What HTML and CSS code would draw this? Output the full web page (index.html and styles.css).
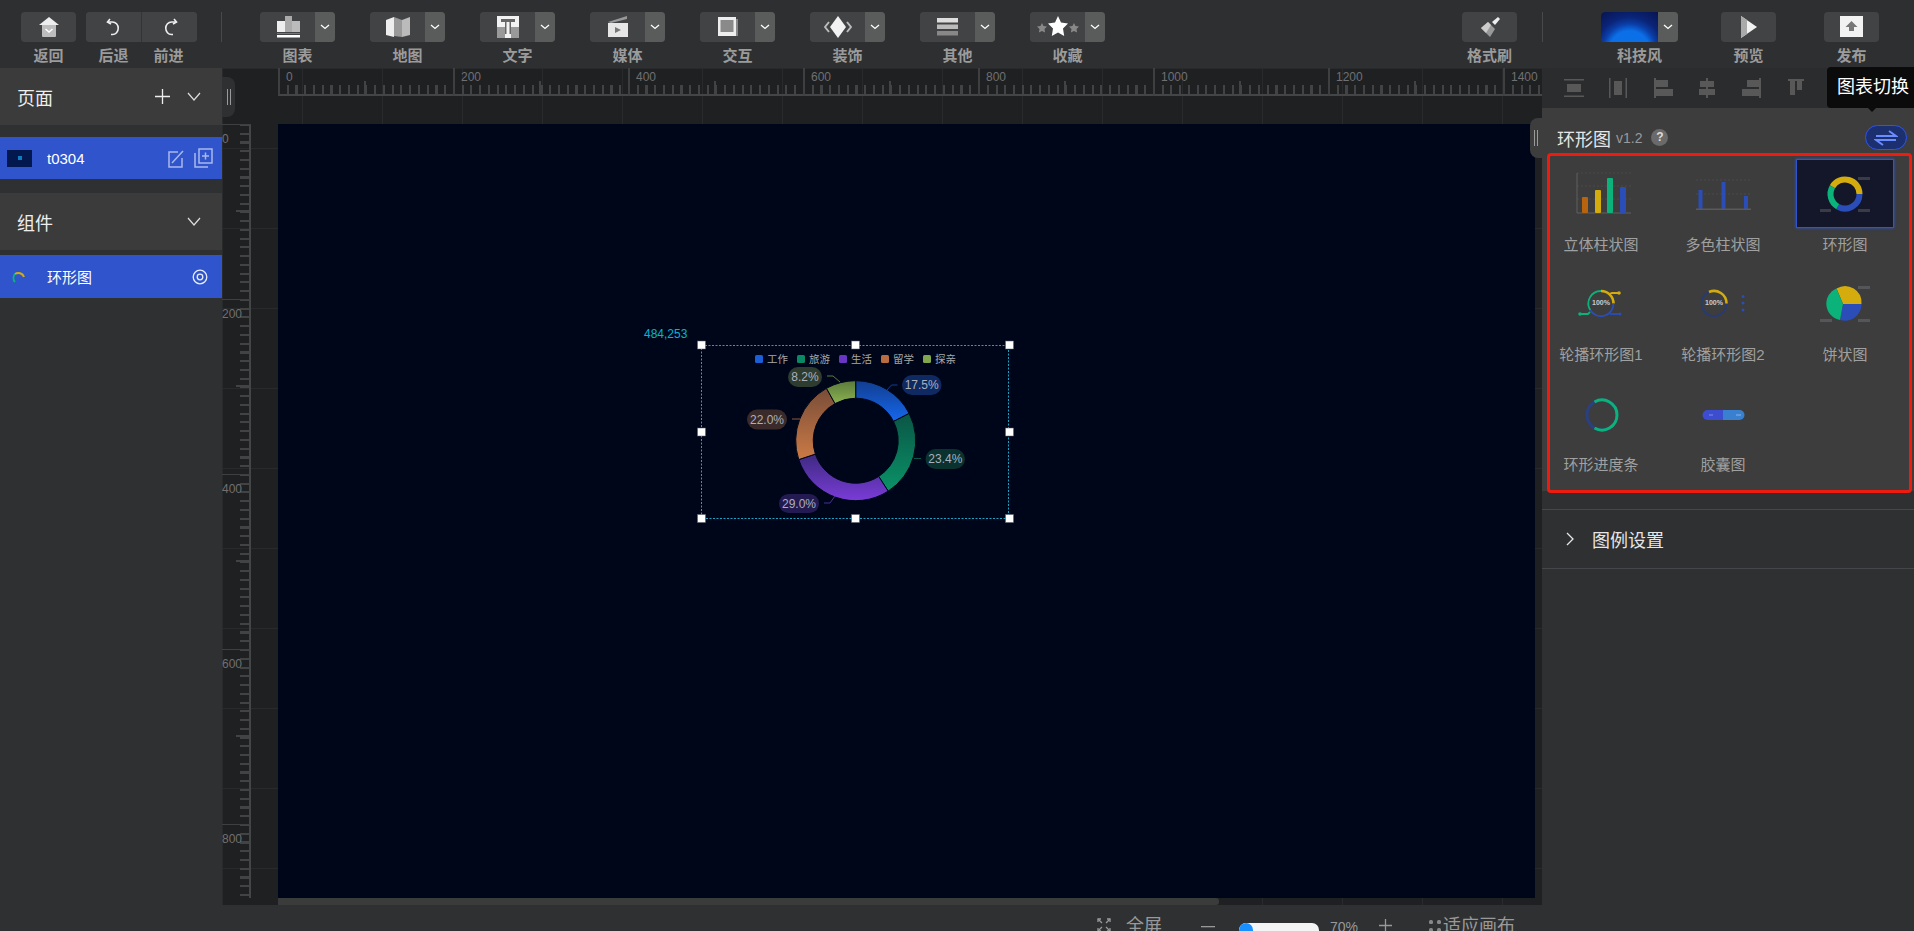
FILE: index.html
```html
<!DOCTYPE html>
<html lang="zh">
<head>
<meta charset="utf-8">
<title>环形图</title>
<link rel="stylesheet" href="styles.css">
</head>
<body>
<div class="app">
  <header class="toolbar">
    <div class="tool first">
      <div class="btn"><span class="btn-main"><svg width="20" height="20" viewBox="0 0 20 20"><path d="M10 0 20 8H0z" fill="#eee"/><path d="M3 8h14v11a1 1 0 0 1-1 1H4a1 1 0 0 1-1-1z" fill="#bdbdbd"/><path d="M6.500 12 10 15l3.500-3" fill="none" stroke="#fff" stroke-width="1.500"/></svg></span></div>
      <span class="tool-label">返回</span>
    </div>
    <div class="tool double">
      <div class="btn">
        <span class="btn-main sep"><svg width="18" height="18" viewBox="0 0 18 18" fill="none" stroke="#eee" stroke-width="1.600"><path d="M5 1 2.500 4 6 6"/><path d="M3 4h4.500a5.500 6 0 1 1 0 12.500H6"/></svg></span>
        <span class="btn-main"><svg width="18" height="18" viewBox="0 0 18 18" fill="none" stroke="#eee" stroke-width="1.600"><path d="M13 1l2.500 3L12 6"/><path d="M15 4h-4.500a5.500 6 0 1 0 0 12.500H12"/></svg></span>
      </div>
      <div class="double-labels"><span class="tool-label">后退</span><span class="tool-label">前进</span></div>
    </div>
    <div class="divider d1"></div>
    <div class="tool-group">
      <div class="tool">
        <div class="btn"><span class="btn-main"><svg width="24" height="24" viewBox="0 0 24 24"><rect x="1" y="6" width="8" height="11" fill="#eee"/><rect x="9" y="1" width="7" height="16" fill="#aaa"/><rect x="16" y="6" width="8" height="11" fill="#bbb"/><rect x="1" y="18" width="23" height="1" fill="#777"/><rect x="1" y="20" width="23" height="2.500" fill="#fff"/></svg></span><span class="btn-drop"><svg class="chev" width="10" height="6" viewBox="0 0 10 6"><path d="M1 1l4 3.500L9 1" fill="none" stroke="#fff" stroke-width="1.300"/></svg></span></div>
        <span class="tool-label">图表</span>
      </div>
      <div class="tool">
        <div class="btn"><span class="btn-main"><svg width="24" height="24" viewBox="0 0 24 24"><path d="M0 5l8-3v20l-8-2z" fill="#eee"/><path d="M8 2l8 3v17l-8-1z" fill="#999"/><path d="M16 5l8-3v18l-8 2z" fill="#bbb"/></svg></span><span class="btn-drop"><svg class="chev" width="10" height="6" viewBox="0 0 10 6"><path d="M1 1l4 3.500L9 1" fill="none" stroke="#fff" stroke-width="1.300"/></svg></span></div>
        <span class="tool-label">地图</span>
      </div>
      <div class="tool">
        <div class="btn"><span class="btn-main"><svg width="22" height="22" viewBox="0 0 22 22"><rect x="0" y="0" width="22" height="11" fill="#f2f2f2"/><rect x="0" y="11" width="22" height="11" fill="#999"/><rect x="8" y="4" width="6" height="18" fill="#f2f2f2"/><rect x="4" y="3" width="14" height="3" fill="#666"/><rect x="8" y="6" width="1.500" height="12" fill="#666"/><rect x="12.500" y="6" width="1.500" height="12" fill="#666"/></svg></span><span class="btn-drop"><svg class="chev" width="10" height="6" viewBox="0 0 10 6"><path d="M1 1l4 3.500L9 1" fill="none" stroke="#fff" stroke-width="1.300"/></svg></span></div>
        <span class="tool-label">文字</span>
      </div>
      <div class="tool">
        <div class="btn"><span class="btn-main"><svg width="22" height="22" viewBox="0 0 22 22"><path d="M1 6 20 0v3L4 7z" fill="#999"/><rect x="1" y="7" width="20" height="14" fill="#e6e6e6"/><path d="M8 11l6 3-6 3z" fill="#777"/></svg></span><span class="btn-drop"><svg class="chev" width="10" height="6" viewBox="0 0 10 6"><path d="M1 1l4 3.500L9 1" fill="none" stroke="#fff" stroke-width="1.300"/></svg></span></div>
        <span class="tool-label">媒体</span>
      </div>
      <div class="tool">
        <div class="btn"><span class="btn-main"><svg width="22" height="22" viewBox="0 0 22 22"><rect x="17" y="3" width="4" height="17" fill="#888"/><rect x="1" y="1" width="18" height="19" fill="#eee"/><rect x="3.500" y="4" width="13" height="12" fill="#8a8a8a"/></svg></span><span class="btn-drop"><svg class="chev" width="10" height="6" viewBox="0 0 10 6"><path d="M1 1l4 3.500L9 1" fill="none" stroke="#fff" stroke-width="1.300"/></svg></span></div>
        <span class="tool-label">交互</span>
      </div>
      <div class="tool">
        <div class="btn"><span class="btn-main"><svg width="28" height="22" viewBox="0 0 28 22"><path d="M14 0l8 11-8 11-8-11z" fill="#f2f2f2"/><path d="M5 6 1 11l4 5M23 6l4 5-4 5" fill="none" stroke="#bbb" stroke-width="2"/></svg></span><span class="btn-drop"><svg class="chev" width="10" height="6" viewBox="0 0 10 6"><path d="M1 1l4 3.500L9 1" fill="none" stroke="#fff" stroke-width="1.300"/></svg></span></div>
        <span class="tool-label">装饰</span>
      </div>
      <div class="tool">
        <div class="btn"><span class="btn-main"><svg width="22" height="18" viewBox="0 0 22 18"><rect width="21" height="4.500" fill="#ddd"/><rect y="6.500" width="21" height="4.500" fill="#bbb"/><rect y="13" width="21" height="4.500" fill="#888"/></svg></span><span class="btn-drop"><svg class="chev" width="10" height="6" viewBox="0 0 10 6"><path d="M1 1l4 3.500L9 1" fill="none" stroke="#fff" stroke-width="1.300"/></svg></span></div>
        <span class="tool-label">其他</span>
      </div>
      <div class="tool">
        <div class="btn"><span class="btn-main"><svg width="42" height="24" viewBox="0 0 42 24"><path id="" d="M5 8l1.500 3 3.500.5-2.500 2.500.6 3.500L5 16l-3.100 1.500.6-3.500L0 11.500l3.500-.5z" fill="#888"/><path d="M37 8l1.500 3 3.500.5-2.500 2.500.6 3.500L37 16l-3.100 1.500.6-3.500-2.500-2.500 3.500-.5z" fill="#888"/><path d="M21 1l3 6.500 7 1-5 5 1.200 7.500L21 17.500 14.800 21l1.200-7.500-5-5 7-1z" fill="#fff"/></svg></span><span class="btn-drop"><svg class="chev" width="10" height="6" viewBox="0 0 10 6"><path d="M1 1l4 3.500L9 1" fill="none" stroke="#fff" stroke-width="1.300"/></svg></span></div>
        <span class="tool-label">收藏</span>
      </div>
    </div>
    <div class="spacer"></div>
    <div class="tool">
      <div class="btn"><span class="btn-main"><svg width="22" height="22" viewBox="0 0 22 22"><path d="M13 6l6-5 2 2-5 6z" fill="#eee"/><path d="M9 6l7 7-5 8-9-9z" fill="#999"/><path d="M9 6l3 3-5 8-5-5z" fill="#ccc"/></svg></span></div>
      <span class="tool-label">格式刷</span>
    </div>
    <div class="divider d2"></div>
    <div class="tool theme">
      <div class="btn"><span class="theme-thumb"></span><span class="btn-drop"><svg class="chev" width="10" height="6" viewBox="0 0 10 6"><path d="M1 1l4 3.500L9 1" fill="none" stroke="#fff" stroke-width="1.300"/></svg></span></div>
      <span class="tool-label">科技风</span>
    </div>
    <div class="tool preview">
      <div class="btn"><span class="btn-main"><svg width="18" height="22" viewBox="0 0 18 22"><path d="M1 0l16 11L1 22z" fill="#f2f2f2"/><path d="M1 0l6 4v14l-6 4z" fill="#aaa"/></svg></span></div>
      <span class="tool-label">预览</span>
    </div>
    <div class="tool publish">
      <div class="btn"><span class="btn-main"><svg width="24" height="22" viewBox="0 0 24 22"><rect width="23" height="21" fill="#f2f2f2"/><path d="M11.500 5l6 6h-3.500v4h-5v-4H5.500z" fill="#777"/></svg></span></div>
      <span class="tool-label">发布</span>
    </div>
  </header>

  <div class="workspace">
    <aside class="left">
      <div class="section-head">
        <span class="section-title">页面</span>
        <svg class="plus" width="15" height="15" viewBox="0 0 15 15"><path d="M7.500 0v15M0 7.500h15" stroke="#eee" stroke-width="1.300"/></svg>
        <svg class="down" width="14" height="9" viewBox="0 0 14 9"><path d="M1 1l6 7 6-7" fill="none" stroke="#ddd" stroke-width="1.200"/></svg>
      </div>
      <div class="row page-row">
        <span class="page-thumb"><i></i></span>
        <span class="row-text">t0304</span>
        <svg class="edit" width="17" height="19" viewBox="0 0 17 19" fill="none" stroke="#a9b8ec" stroke-width="1.500"><path d="M14 9v9H1V3h9"/><path d="M4 14 15 2"/></svg>
        <svg class="copy" width="19" height="20" viewBox="0 0 19 20" fill="none" stroke="#a9b8ec" stroke-width="1.500"><rect x="5" y="1" width="13" height="14"/><path d="M1 5v14h13"/><path d="M11.500 4.500v7M8 8h7"/></svg>
      </div>
      <div class="section-head second">
        <span class="section-title">组件</span>
        <svg class="down" width="14" height="9" viewBox="0 0 14 9"><path d="M1 1l6 7 6-7" fill="none" stroke="#ddd" stroke-width="1.200"/></svg>
      </div>
      <div class="row comp-row">
        <svg class="comp-icon" width="16" height="16" viewBox="0 0 16 16" fill="none" stroke-width="2"><path d="M4 13A6 6 0 0 1 4 5" stroke="#0bb27a"/><path d="M4 5a6 6 0 0 1 9 3" stroke="#d4ac0d"/></svg>
        <span class="row-text comp-text">环形图</span>
        <svg class="eye" width="16" height="16" viewBox="0 0 16 16" fill="none" stroke="#e8ecfa" stroke-width="1.300"><circle cx="8" cy="8" r="6.800"/><circle cx="8" cy="8" r="2.800"/></svg>
      </div>
    </aside>

    <main class="center">
      <div class="handle handle-left"><i></i><i></i></div>
      <div class="handle handle-right"><i></i><i></i></div>
      <div class="ruler-strip">
        <div class="ruler-h">
          <span class="seg-h">0</span><span class="seg-h">200</span><span class="seg-h">400</span><span class="seg-h">600</span><span class="seg-h">800</span><span class="seg-h">1000</span><span class="seg-h">1200</span><span class="seg-h">1400</span>
        </div>
      </div>
      <div class="stage">
        <div class="ruler-col">
          <div class="ruler-v">
            <span class="seg-v">0</span><span class="seg-v">200</span><span class="seg-v">400</span><span class="seg-v">600</span><span class="seg-v">800</span>
          </div>
        </div>
        <div class="canvas">
          <svg class="chart" width="400" height="210" viewBox="630 320 400 210">
            <defs>
              <linearGradient id="gb" x1="0" y1="0" x2="0" y2="1"><stop offset="0" stop-color="#123d8e"/><stop offset="1" stop-color="#1568ee"/></linearGradient>
              <linearGradient id="gg" x1="0" y1="0" x2="0" y2="1"><stop offset="0" stop-color="#0a5645"/><stop offset="1" stop-color="#0a9268"/></linearGradient>
              <linearGradient id="gp" x1="0" y1="0" x2="0" y2="1"><stop offset="0" stop-color="#3d2a80"/><stop offset="1" stop-color="#7a3cd8"/></linearGradient>
              <linearGradient id="go" x1="0" y1="0" x2="0" y2="1"><stop offset="0" stop-color="#784d38"/><stop offset="1" stop-color="#cc7a45"/></linearGradient>
              <linearGradient id="gl" x1="0" y1="0" x2="0" y2="1"><stop offset="0" stop-color="#5a7a3c"/><stop offset="1" stop-color="#8cb250"/></linearGradient>
            </defs>
            <text class="coord" x="644" y="338">484,253</text>
            <rect x="701.500" y="345.500" width="307" height="173" fill="none" stroke="#1aa3c4" stroke-dasharray="2 1.500"/>
            <g class="legend-swatches">
              <rect x="755" y="355" width="8" height="8" rx="1.500" fill="#1a5fd8"/><rect x="797" y="355" width="8" height="8" rx="1.500" fill="#0a8a64"/><rect x="839" y="355" width="8" height="8" rx="1.500" fill="#6a35c4"/><rect x="881" y="355" width="8" height="8" rx="1.500" fill="#b96c40"/><rect x="923" y="355" width="8" height="8" rx="1.500" fill="#82a64c"/>
            </g>
            <text class="legend" x="767" y="363">工作</text><text class="legend" x="809" y="363">旅游</text><text class="legend" x="851" y="363">生活</text><text class="legend" x="893" y="363">留学</text><text class="legend" x="935" y="363">探亲</text>
            <g stroke="#000619" stroke-width="1">
              <path d="M855.700 380.700A60 60 0 0 1 909.160 413.460L893.570 421.410A42.500 42.500 0 0 0 855.700 398.200Z" fill="url(#gb)"/>
              <path d="M909.160 413.460A60 60 0 0 1 888.160 491.160L878.690 476.440A42.500 42.500 0 0 0 893.570 421.410Z" fill="url(#gg)"/>
              <path d="M888.160 491.160A60 60 0 0 1 798.750 459.600L815.360 454.090A42.500 42.500 0 0 0 878.690 476.440Z" fill="url(#gp)"/>
              <path d="M798.750 459.600A60 60 0 0 1 826.460 388.310L834.990 403.590A42.500 42.500 0 0 0 815.360 454.090Z" fill="url(#go)"/>
              <path d="M826.460 388.310A60 60 0 0 1 855.700 380.700V398.200A42.500 42.500 0 0 0 834.990 403.590Z" fill="url(#gl)"/>
            </g>
            <g fill="none" stroke-width="1">
              <path d="M887 390l4.500-5h6" stroke="#123d8e"/>
              <path d="M914 458.500h7" stroke="#0a5645"/>
              <path d="M835 496l-5 7h-6" stroke="#4a2f96"/>
              <path d="M800 419h-8" stroke="#8a5a40"/>
              <path d="M840 382l-7-6h-6" stroke="#5a7a3c"/>
            </g>
            <rect x="902" y="375" width="39.500" height="20" rx="10" fill="#0f2a63"/>
            <rect x="925.500" y="449" width="39.500" height="20" rx="10" fill="#0a322f"/>
            <rect x="779" y="494" width="40" height="19" rx="9.500" fill="#241a52"/>
            <rect x="747" y="409.500" width="40" height="20" rx="10" fill="#3a2a2a"/>
            <rect x="788" y="367" width="34" height="20" rx="10" fill="#2d3c2e"/>
            <text class="pct" x="921.700" y="389">17.5%</text>
            <text class="pct" x="945.300" y="462.500">23.4%</text>
            <text class="pct" x="799" y="507.500">29.0%</text>
            <text class="pct" x="767" y="423.500">22.0%</text>
            <text class="pct" x="805" y="381">8.2%</text>
            <g fill="#fff" stroke="#555a66" stroke-width=".5">
              <rect x="697.500" y="341" width="8" height="8"/><rect x="851.500" y="341" width="8" height="8"/><rect x="1005.500" y="341" width="8" height="8"/>
              <rect x="697.500" y="428" width="8" height="8"/><rect x="1005.500" y="428" width="8" height="8"/>
              <rect x="697.500" y="514.500" width="8" height="8"/><rect x="851.500" y="514.500" width="8" height="8"/><rect x="1005.500" y="514.500" width="8" height="8"/>
            </g>
          </svg>
        </div>
      </div>
      <div class="hscroll"><span class="hscroll-thumb"></span></div>
      <div class="statusbar">
        <svg class="st-full" width="14" height="14" viewBox="0 0 14 14" fill="none" stroke="#999" stroke-width="1.300"><path d="M1 1l4 4M13 1 9 5M1 13l4-4M13 13 9 9"/><path d="M1 4V1h3M10 1h3v3M1 10v3h3M10 13h3v-3"/></svg>
        <span class="st-text st-fulltext">全屏</span>
        <svg class="st-minus" width="14" height="2" viewBox="0 0 14 2"><rect width="14" height="1.300" fill="#999"/></svg>
        <span class="slider"><i></i></span>
        <span class="st-pct">70%</span>
        <svg class="st-plus" width="13" height="13" viewBox="0 0 13 13"><path d="M6.500 0v13M0 6.500h13" stroke="#999" stroke-width="1.300"/></svg>
        <svg class="st-fit" width="12" height="12" viewBox="0 0 12 12" fill="#888"><rect width="4" height="4" rx="1.500"/><rect x="8" width="4" height="4" rx="1.500"/><rect y="8" width="4" height="4" rx="1.500"/><rect x="8" y="8" width="4" height="4" rx="1.500"/></svg>
        <span class="st-text st-fittext">适应画布</span>
      </div>
    </main>

    <aside class="right">
      <div class="align-bar">
        <svg width="20" height="20" viewBox="0 0 20 20" fill="#585858"><rect y="1" width="20" height="1.500"/><rect x="3" y="6" width="14" height="8"/><rect y="17.500" width="20" height="1.500"/></svg>
        <svg width="20" height="20" viewBox="0 0 20 20" fill="#585858"><rect x="1" width="1.500" height="20"/><rect x="6" y="3" width="8" height="14"/><rect x="17.500" width="1.500" height="20"/></svg>
        <svg width="20" height="20" viewBox="0 0 20 20" fill="#585858"><rect x="1" width="2" height="20"/><rect x="3" y="2" width="12" height="7"/><rect x="3" y="11" width="17" height="7"/></svg>
        <svg width="20" height="20" viewBox="0 0 20 20" fill="#585858"><rect x="9" width="2" height="20"/><rect x="3" y="3" width="14" height="6"/><rect x="2" y="11" width="16" height="6"/></svg>
        <svg width="20" height="20" viewBox="0 0 20 20" fill="#585858"><rect x="17" width="2" height="20"/><rect x="5" y="2" width="12" height="7"/><rect y="11" width="17" height="7"/></svg>
        <svg width="20" height="20" viewBox="0 0 20 20" fill="#585858"><rect x="2" y="1" width="16" height="2"/><rect x="4" y="3" width="5" height="14"/><rect x="11" y="3" width="5" height="9"/></svg>
      </div>
      <div class="tooltip">图表切换</div>
      <div class="panel">
        <div class="title-row">
          <span class="title">环形图</span>
          <span class="version">v1.2</span>
          <span class="help">?</span>
          <span class="switch"><svg width="24" height="18" viewBox="0 0 24 18" fill="none" stroke="#6a8cff" stroke-width="2"><path d="M2 7h20L15 2"/><path d="M22 11H2l7 5"/></svg></span>
        </div>
        <div class="grid">
          <figure class="cell">
            <svg class="thumb" width="98" height="69" viewBox="0 0 98 69">
              <g stroke="#4a4b4b" stroke-dasharray="2 2"><path d="M25 14h54M25 27h54M25 40h54"/></g>
              <path d="M25 14v40h54" fill="none" stroke="#606060"/>
              <rect x="30" y="38" width="6" height="16" rx="1" fill="#b8640f"/>
              <rect x="43" y="31" width="6" height="23" rx="1" fill="#d4ac0d"/>
              <rect x="55" y="19" width="6" height="35" rx="1" fill="#0bb27a"/>
              <rect x="68" y="28" width="6" height="26" rx="1" fill="#2a4db8"/>
            </svg>
            <figcaption>立体柱状图</figcaption>
          </figure>
          <figure class="cell">
            <svg class="thumb" width="98" height="69" viewBox="0 0 98 69">
              <g stroke="#4a4b4b" stroke-dasharray="2 2"><path d="M22 21h55M22 35h55"/></g>
              <rect x="24.500" y="31" width="4" height="19" fill="#2a4db8"/>
              <rect x="47.500" y="23" width="4" height="27" fill="#2a4db8"/>
              <rect x="70" y="37" width="4" height="13" fill="#2a4db8"/>
              <rect x="22" y="49.500" width="55" height="1.500" fill="#5a5a5a"/>
            </svg>
            <figcaption>多色柱状图</figcaption>
          </figure>
          <figure class="cell">
            <svg class="thumb selected" width="98" height="69" viewBox="0 0 98 69" fill="none" stroke-width="6">
              <rect x="62" y="18" width="12" height="3" fill="#3a3b44" stroke="none"/><rect x="24" y="50" width="11" height="3" fill="#3a3b44" stroke="none"/><rect x="62" y="50" width="12" height="3" fill="#3a3b44" stroke="none"/>
              <path d="M36.440 27.750A14.500 14.500 0 0 1 63.500 35" stroke="#d4ac0d"/>
              <path d="M63.500 35A14.500 14.500 0 0 1 41.750 47.560" stroke="#2a4db8"/>
              <path d="M41.750 47.560A14.500 14.500 0 0 1 36.440 27.750" stroke="#0bb27a"/>
            </svg>
            <figcaption>环形图</figcaption>
          </figure>
          <figure class="cell">
            <svg class="thumb" width="98" height="69" viewBox="0 0 98 69" fill="none" stroke-width="1.800">
              <path d="M49 22A12.500 12.500 0 0 1 61.500 34.500" stroke="#d4ac0d" stroke-width="2.600"/>
              <path d="M61.500 34.500A12.500 12.500 0 0 1 38.200 41" stroke="#2a4db8"/>
              <path d="M38.200 41A12.500 12.500 0 0 1 49 22" stroke="#0bb27a"/>
              <path d="M57 25l3-1h6" stroke="#d4ac0d"/><path d="M28 45h8l2-2" stroke="#0bb27a"/><path d="M58 45h10" stroke="#2a4db8"/>
              <circle cx="67" cy="24" r="1.800" fill="#d4ac0d" stroke="none"/><circle cx="28" cy="45" r="1.800" fill="#0bb27a" stroke="none"/><circle cx="68" cy="45" r="1.500" fill="#2a4db8" stroke="none"/>
              <text class="mini" x="49" y="36">100%</text>
            </svg>
            <figcaption>轮播环形图1</figcaption>
          </figure>
          <figure class="cell">
            <svg class="thumb" width="98" height="69" viewBox="0 0 98 69" fill="none" stroke-width="1.600">
              <circle cx="40" cy="34.500" r="12.500" stroke="#253a7c"/>
              <path d="M35 23A12.500 12.500 0 0 1 52.500 34.500" stroke="#d4ac0d" stroke-width="2.600"/>
              <g fill="#2a4db8" stroke="none"><circle cx="69" cy="27.500" r="1.500"/><circle cx="69" cy="34" r="1.500"/><circle cx="69" cy="41" r="1.500"/></g>
              <text class="mini" x="40" y="36">100%</text>
            </svg>
            <figcaption>轮播环形图2</figcaption>
          </figure>
          <figure class="cell">
            <svg class="thumb" width="98" height="69" viewBox="0 0 98 69">
              <path d="M47 35 40.500 19.500A16.500 16.500 0 0 1 65.500 35z" fill="#d4ac0d"/>
              <path d="M47 35H65.500A16.500 16.500 0 0 1 44 51z" fill="#2a4db8"/>
              <path d="M47 35 44 51A16.500 16.500 0 0 1 40.500 19.500z" fill="#0bb27a"/>
              <g fill="#55565a"><rect x="62" y="17" width="12" height="3"/><rect x="24" y="50" width="12" height="3"/><rect x="62" y="50" width="12" height="3"/></g>
            </svg>
            <figcaption>饼状图</figcaption>
          </figure>
          <figure class="cell">
            <svg class="thumb" width="98" height="69" viewBox="0 0 98 69" fill="none" stroke-width="3">
              <circle cx="50" cy="36" r="15" stroke="#2a4080"/>
              <path d="M42.500 23A15 15 0 1 1 42.500 49" stroke="#0bb27a"/>
            </svg>
            <figcaption>环形进度条</figcaption>
          </figure>
          <figure class="cell">
            <svg class="thumb" width="98" height="69" viewBox="0 0 98 69">
              <path d="M33.500 31H49v10H33.500a5 5 0 0 1 0-10z" fill="#3c4dd0"/>
              <path d="M49 31h16.500a5 5 0 0 1 0 10H49z" fill="#3a80d0"/>
              <rect x="35" y="35.500" width="4" height="1" fill="#7f8fe8"/><rect x="62" y="35.500" width="5" height="1" fill="#85b5ea"/>
            </svg>
            <figcaption>胶囊图</figcaption>
          </figure>
        </div>
      </div>
      <div class="accordion">
        <svg width="9" height="14" viewBox="0 0 9 14"><path d="M1 1l6 6-6 6" fill="none" stroke="#e6e6e6" stroke-width="1.300"/></svg>
        <span>图例设置</span>
      </div>
      <div class="redbox"></div>
    </aside>
  </div>
</div>
</body>
</html>
```
FILE: styles.css
```css
* { box-sizing: border-box; }
html, body { margin: 0; height: 100%; overflow: hidden; background: #2f3032; }
body { font-family: "Liberation Sans", "Noto Sans CJK SC", sans-serif; color: #ddd; }
.app { width: 1914px; height: 931px; display: flex; flex-direction: column; overflow: hidden; }

/* toolbar */
.toolbar { height: 68px; flex: none; display: flex; align-items: flex-start; padding: 12px 35px 0 21px; background: #2e2f31; }
.tool { display: flex; flex-direction: column; align-items: center; }
.btn { display: flex; height: 30px; border-radius: 4px; overflow: hidden; background: #424344; }
.btn-main { width: 55px; height: 30px; display: flex; align-items: center; justify-content: center; background: #424344; }
.btn-main.sep { border-right: 1px solid #343536; width: 56px; }
.btn-drop { width: 20px; height: 30px; display: flex; align-items: center; justify-content: center; background: #5a5b5b; }
.tool-label { margin-top: 5px; font-size: 15px; line-height: 17px; font-weight: 700; color: #9b9b9b; white-space: nowrap; }
.double { margin-left: 10px; }
.double-labels { display: flex; width: 111px; }
.double-labels .tool-label { width: 55px; text-align: center; }
.divider { width: 1px; height: 30px; background: #48494a; flex: none; }
.d1 { margin-left: 24px; margin-right: 38px; }
.d2 { margin-left: 25px; margin-right: 58px; }
.tool-group { display: flex; gap: 35px; }
.spacer { flex: 1; }
.theme-thumb { width: 57px; height: 30px; background: radial-gradient(circle at 50% 130%, #0b6fe8 0 42%, #0a3ea8 56%, #0a2478 70%, #08144e 100%); }
.preview { margin-left: 43px; }
.publish { margin-left: 48px; }

/* layout */
.workspace { flex: 1; display: flex; min-height: 0; }
.left { width: 222px; flex: none; background: #2f3032; }
.section-head { height: 57px; background: #3a3b3a; display: flex; align-items: center; padding-left: 17px; position: relative; }
.section-head.second { margin-top: 14px; }
.section-title { font-size: 18px; color: #eee; flex: 1; }
.plus { margin-right: 17px; }
.down { margin-right: 21px; }
.row { background: #2f54cc; display: flex; align-items: center; color: #fff; font-size: 15px; }
.page-row { height: 42px; margin-top: 12px; padding-left: 7px; }
.comp-row { height: 43px; margin-top: 5px; padding-left: 11px; }
.page-thumb { width: 25px; height: 17px; background: #03184f; display: flex; align-items: center; justify-content: center; }
.page-thumb i { width: 4px; height: 4px; background: #0e7cc0; }
.row-text { margin-left: 15px; flex: 1; }
.comp-text { margin-left: 20px; }
.edit { margin-right: 9px; }
.copy { margin-right: 9px; }
.eye { margin-right: 14px; }

/* center */
.center { flex: 1; min-width: 0; display: flex; flex-direction: column; position: relative; background-color: #1f2022; background-image: linear-gradient(90deg, #292a2c 1px, transparent 1px), linear-gradient(#292a2c 1px, transparent 1px); background-size: 80px 80px; }
.handle { position: absolute; display: flex; gap: 2px; align-items: center; justify-content: center; z-index: 3; }
.handle i { width: 1px; height: 16px; background: #9a9a9a; }
.handle-left { left: 0; top: 9px; width: 13px; height: 40px; background: #2f3032; border-radius: 0 8px 8px 0; }
.handle-right { right: 0; top: 50px; width: 12px; height: 40px; background: #3c3d3c; border-radius: 8px 0 0 8px; }
.ruler-strip { height: 56px; flex: none; padding-left: 56px; overflow: hidden; }
.ruler-h { display: flex; height: 28px; }
.seg-h { flex: 0 0 175px; height: 28px; padding: 2px 0 0 6px; font-size: 12px; line-height: 14px; color: #6f7072; border-left: 2px solid #3e3f40; border-bottom: 2px solid #444546; background-origin: border-box; background-clip: border-box; background-repeat: no-repeat; background-image: linear-gradient(#424344, #424344), repeating-linear-gradient(90deg, #424344 0 2px, transparent 2px 8.75px); background-size: 2px 15px, 100% 11px; background-position: 86px 100%, 0 100%; }
.stage { flex: none; height: 774px; display: flex; }
.ruler-col { width: 56px; flex: none; overflow: hidden; }
.ruler-v { width: 29px; display: flex; flex-direction: column; }
.seg-v { flex: 0 0 175px; width: 29px; padding-top: 7px; font-size: 12px; line-height: 14px; color: #6f7072; border-top: 1px solid #3e3f40; border-right: 2px solid #444546; background-origin: border-box; background-repeat: no-repeat; background-image: linear-gradient(#424344, #424344), repeating-linear-gradient(#424344 0 2px, transparent 2px 8.75px); background-size: 15px 2px, 11px 100%; background-position: 100% 86px, 100% 0; }
.canvas { width: 1257px; height: 774px; flex: none; background: #00061a; position: relative; }
.chart { position: absolute; left: 352px; top: 196px; }
.coord { font-size: 12px; fill: #00b4dc; }
.legend { font-size: 10.500px; fill: #a8a8a8; }
.pct { font-size: 12px; fill: #aab0bc; text-anchor: middle; }
.hscroll { height: 7px; flex: none; padding-left: 56px; }
.hscroll-thumb { display: block; width: 941px; height: 7px; background: #3a3b3b; border-radius: 0 3px 3px 0; }
.statusbar { height: 60px; flex: none; background: #2f3032; display: flex; align-items: flex-start; padding-top: 10px; }
.st-full { margin: 3px 0 0 875px; }
.st-text { font-size: 18px; line-height: 22px; color: #999; white-space: nowrap; }
.st-fulltext { margin-left: 15px; }
.st-minus { margin: 11px 0 0 39px; }
.slider { margin: 8px 0 0 24px; width: 80px; height: 14px; border-radius: 7px; background: #f4f4f4; overflow: hidden; display: block; }
.slider i { display: block; width: 14px; height: 14px; border-radius: 7px; background: #1890ff; }
.st-pct { margin: 3px 0 0 11px; font-size: 14px; line-height: 18px; color: #999; width: 28px; }
.st-plus { margin: 4px 0 0 21px; }
.st-fit { margin: 5px 0 0 37px; }
.st-fittext { margin-left: 2px; }

/* right */
.right { width: 372px; flex: none; background: #2f3032; position: relative; }
.align-bar { height: 40px; background: #2b2c2e; display: flex; align-items: center; padding-left: 22px; gap: 24.400px; }
.tooltip { position: absolute; right: 0; top: -1px; width: 87px; height: 41px; padding-left: 10px; font-size: 18px; line-height: 40px; color: #fff; background: #0b0b0c; border-radius: 4px 0 0 4px; white-space: nowrap; overflow: hidden; z-index: 5; }
.right::after { content: ""; position: absolute; left: 326px; top: 40px; border: 4px solid transparent; border-top-color: #0b0b0c; border-bottom: 0; z-index: 5; }
.panel { height: 383px; background: #3c3d3c; padding-top: 17px; }
.title-row { height: 25px; display: flex; align-items: center; padding-left: 15px; }
.title { font-size: 18px; color: #e6e6e6; }
.version { font-size: 14px; color: #9a9a9a; margin-left: 5px; }
.help { width: 17px; height: 17px; margin-left: 9px; border-radius: 50%; background: #6a6a6a; color: #ddd; font-size: 12px; font-weight: 700; line-height: 17px; text-align: center; }
.switch { margin-left: auto; margin-right: 7px; width: 42px; height: 25px; border: 1.500px solid #2f54ee; border-radius: 13px; background: #1c2f6e; display: flex; align-items: center; justify-content: center; }
.grid { margin-top: 9px; display: grid; grid-template-columns: repeat(3, 118px); column-gap: 4px; row-gap: 14px; margin-left: 0; margin-right: 0; transform: translateX(0); }
.cell { margin: 0; display: flex; flex-direction: column; align-items: center; }
.thumb { display: block; }
.selected { background: #14162a; outline: 1px solid #2f54cc; outline-offset: -1px; box-shadow: 0 0 3px #2f54cc; }
.mini { font-size: 7px; fill: #ccc; text-anchor: middle; font-weight: 700; }
figcaption { margin-top: 7px; font-size: 15px; line-height: 20px; color: #a0a0a0; white-space: nowrap; }
.accordion { margin-top: 18px; height: 60px; border-top: 1px solid #45464a; border-bottom: 1px solid #45464a; display: flex; align-items: center; padding-left: 24px; font-size: 18px; color: #e6e6e6; }
.accordion span { margin-left: 17px; }
.redbox { position: absolute; left: 5px; top: 85px; width: 365px; height: 340px; border: 3px solid #ee1c10; border-radius: 4px; pointer-events: none; }
```
